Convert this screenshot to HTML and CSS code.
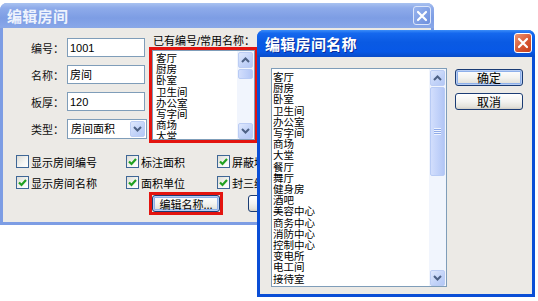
FILE: index.html
```html
<!DOCTYPE html>
<html lang="zh-CN">
<head>
    <meta charset="UTF-8">
    <title>编辑房间</title>
    <link rel="stylesheet" href="styles.css">
</head>
<body>
    <div class="desktop">
        <!-- main dialog, inactive -->
        <div class="window window-main inactive">
            <div class="titlebar">
                <span class="title">编辑房间</span>
                <span class="close-btn">
                    <svg width="12" height="12" viewBox="0 0 12 12"><path d="M2 2 L10 10 M10 2 L2 10" stroke="#fff" stroke-width="2.2" stroke-linecap="round"/></svg>
                </span>
            </div>
            <div class="body main-body">
                <div class="top-area">
                    <div class="fields">
                        <span class="field-label">编号：</span><div class="input">1001</div>
                        <span class="field-label">名称：</span><div class="input">房间</div>
                        <span class="field-label">板厚：</span><div class="input">120</div>
                        <span class="field-label">类型：</span>
                        <div class="combo">
                            <span class="combo-text">房间面积</span>
                            <span class="arrow-btn">
                                <svg width="9" height="6" viewBox="0 0 9 6"><path d="M1 1 L4.5 4.5 L8 1" fill="none" stroke="#4d6185" stroke-width="2"/></svg>
                            </span>
                        </div>
                    </div>
                    <div class="names">
                        <div class="names-label">已有编号/常用名称：</div>
                        <div class="highlight">
                            <div class="listbox listbox-small">
                                <ul class="items">
                                    <li>客厅</li><li>厨房</li><li>卧室</li><li>卫生间</li>
                                    <li>办公室</li><li>写字间</li><li>商场</li><li>大堂</li>
                                </ul>
                                <div class="scrollbar">
                                    <span class="arrow-btn sb-btn">
                                        <svg width="9" height="6" viewBox="0 0 9 6"><path d="M1 5 L4.5 1.5 L8 5" fill="none" stroke="#4d6185" stroke-width="2"/></svg>
                                    </span>
                                    <div class="sb-track"><div class="sb-thumb thumb-small"></div></div>
                                    <span class="arrow-btn sb-btn">
                                        <svg width="9" height="6" viewBox="0 0 9 6"><path d="M1 1 L4.5 4.5 L8 1" fill="none" stroke="#4d6185" stroke-width="2"/></svg>
                                    </span>
                                </div>
                            </div>
                        </div>
                    </div>
                </div>

                <div class="checks">
                    <label class="check"><span class="box"></span>显示房间编号</label>
                    <label class="check"><span class="box"><svg width="11" height="11" viewBox="0 0 11 11"><path d="M2 5.5 L4.5 8 L9 3" fill="none" stroke="#21a121" stroke-width="2.2"/></svg></span>标注面积</label>
                    <label class="check"><span class="box"><svg width="11" height="11" viewBox="0 0 11 11"><path d="M2 5.5 L4.5 8 L9 3" fill="none" stroke="#21a121" stroke-width="2.2"/></svg></span>屏蔽墙体</label>
                    <label class="check"><span class="box"><svg width="11" height="11" viewBox="0 0 11 11"><path d="M2 5.5 L4.5 8 L9 3" fill="none" stroke="#21a121" stroke-width="2.2"/></svg></span>显示房间名称</label>
                    <label class="check"><span class="box"><svg width="11" height="11" viewBox="0 0 11 11"><path d="M2 5.5 L4.5 8 L9 3" fill="none" stroke="#21a121" stroke-width="2.2"/></svg></span>面积单位</label>
                    <label class="check"><span class="box"><svg width="11" height="11" viewBox="0 0 11 11"><path d="M2 5.5 L4.5 8 L9 3" fill="none" stroke="#21a121" stroke-width="2.2"/></svg></span>封三维</label>
                </div>

                <div class="actions">
                    <div class="highlight">
                        <button class="btn btn-focus btn-edit">编辑名称...</button>
                    </div>
                    <button class="btn btn-edit">确定</button>
                </div>
            </div>
        </div>

        <!-- name editor, active -->
        <div class="window window-names active">
            <div class="titlebar">
                <span class="title">编辑房间名称</span>
                <span class="close-btn">
                    <svg width="12" height="12" viewBox="0 0 12 12"><path d="M2 2 L10 10 M10 2 L2 10" stroke="#fff" stroke-width="2.2" stroke-linecap="round"/></svg>
                </span>
            </div>
            <div class="body names-body">
                <div class="listbox listbox-large">
                    <ul class="items">
                        <li>客厅</li><li>厨房</li><li>卧室</li><li>卫生间</li><li>办公室</li>
                        <li>写字间</li><li>商场</li><li>大堂</li><li>餐厅</li><li>舞厅</li>
                        <li>健身房</li><li>酒吧</li><li>美容中心</li><li>商务中心</li><li>消防中心</li>
                        <li>控制中心</li><li>变电所</li><li>电工间</li><li>接待室</li>
                    </ul>
                    <div class="scrollbar">
                        <span class="arrow-btn sb-btn">
                            <svg width="9" height="6" viewBox="0 0 9 6"><path d="M1 5 L4.5 1.5 L8 5" fill="none" stroke="#4d6185" stroke-width="2"/></svg>
                        </span>
                        <div class="sb-track">
                            <div class="sb-thumb thumb-large"><span class="grip"></span></div>
                        </div>
                        <span class="arrow-btn sb-btn">
                            <svg width="9" height="6" viewBox="0 0 9 6"><path d="M1 1 L4.5 4.5 L8 1" fill="none" stroke="#4d6185" stroke-width="2"/></svg>
                        </span>
                    </div>
                </div>
                <div class="side-buttons">
                    <button class="btn btn-focus btn-side">确定</button>
                    <button class="btn btn-side">取消</button>
                </div>
            </div>
        </div>
    </div>
</body>
</html>
```

FILE: styles.css
```css
/* XP-ish palette */
:root {
    --face: #eceae6;
    --field-border: #7f9db9;
    --active-frame: #0a4ed6;
    --inactive-frame: #7d9de4;
    --red-mark: #e3140f;
}

* {
    margin: 0;
    padding: 0;
    box-sizing: border-box;
}

body {
    background: #fff;
    font-family: "Liberation Sans", "Noto Sans CJK SC", sans-serif;
    font-size: 11px;
    color: #000;
}

.desktop {
    position: relative;
    width: 538px;
    height: 301px;
    overflow: hidden;
}

/* Windows */
.window {
    position: absolute;
    display: flex;
    flex-direction: column;
    border-radius: 7px 7px 0 0;
    overflow: hidden;
}

.window-main {
    left: 0;
    top: 3px;
    width: 434px;
    height: 222px;
    background: var(--inactive-frame);
}

.window-names {
    left: 257px;
    top: 30px;
    width: 278px;
    height: 267px;
    background: var(--active-frame);
}

.titlebar {
    display: flex;
    align-items: center;
    justify-content: space-between;
    padding: 0 3px 0 7px;
    flex-shrink: 0;
}

.title {
    font-family: "Noto Sans CJK SC", sans-serif;
    font-size: 15px;
    font-weight: bold;
    line-height: 16px;
    letter-spacing: 0.3px;
}

.inactive .titlebar {
    height: 25px;
    background: linear-gradient(#a9c2f0 0%, #8eabea 20%, #7d9de4 60%, #86a5e8 90%, #8aa8e6 100%);
}

.inactive .title {
    color: #eef3fd;
}

.active .titlebar {
    height: 27px;
    padding-left: 8px;
    background: linear-gradient(#3c8df8 0%, #1568ee 12%, #0a5ae3 45%, #0858e6 80%, #0a4cc8 100%);
}

.active .title {
    color: #fff;
    text-shadow: 1px 1px 0 #0c2f9c;
}

.close-btn {
    width: 18px;
    height: 19px;
    display: flex;
    align-items: center;
    justify-content: center;
    border-radius: 3px;
    border: 1px solid #fff;
}

.inactive .close-btn {
    background: linear-gradient(135deg, #98b4ee, #6d8fdd);
    border-color: #dce6fa;
}

.active .close-btn {
    height: 20px;
    margin-top: -1px;
    background: linear-gradient(135deg, #ee9674, #d5532f 60%, #c4401e);
}

.body {
    flex: 1;
    background: var(--face);
    margin: 0 3px 3px;
}

/* Main dialog body */
.top-area {
    display: flex;
    align-items: flex-start;
}

.fields {
    display: grid;
    grid-template-columns: 61px 80px;
    grid-auto-rows: 19px;
    row-gap: 8px;
    column-gap: 3px;
    margin-top: 10px;
    align-items: center;
}

.field-label {
    font-family: "Noto Sans CJK SC", sans-serif;
    text-align: right;
    line-height: 12px;
    color: #111;
}

.input {
    width: 78px;
    height: 19px;
    background: #fff;
    border: 1px solid var(--field-border);
    padding: 2px 2px 0;
    line-height: 14px;
}

.combo {
    display: flex;
    align-items: center;
    justify-content: space-between;
    height: 20px;
    background: #fff;
    border: 1px solid var(--field-border);
    padding: 0 1px 0 3px;
    margin-top: 1px;
}

.combo-text {
    line-height: 14px;
}

.arrow-btn {
    width: 15px;
    height: 16px;
    display: flex;
    align-items: center;
    justify-content: center;
    border-radius: 2px;
    border: 1px solid #bccdf4;
    background: linear-gradient(135deg, #dfe8fd, #c1d2f8 60%, #b4c8f6);
}

.names {
    margin: 7px 0 0 2px;
}

.names-label {
    padding-left: 4px;
    line-height: 12px;
    white-space: nowrap;
}

.highlight {
    border: 3px solid var(--red-mark);
}

.listbox {
    display: flex;
    background: #fff;
    border: 1px solid var(--field-border);
    overflow: hidden;
}

.listbox-small {
    width: 103px;
    height: 90px;
}

.listbox-large {
    width: 176px;
    height: 219px;
}

.items {
    list-style: none;
    flex: 1;
    font-family: "Noto Sans CJK SC", sans-serif;
    font-size: 10.5px;
    line-height: 11.2px;
    overflow: hidden;
}

.listbox-small .items {
    padding: 1px 0 0 3px;
}

.listbox-large .items {
    padding: 2px 0 0 1px;
}

.scrollbar {
    display: flex;
    flex-direction: column;
    width: 17px;
    padding: 1px 0 0 1px;
    background: #f1f5fd;
}

.sb-btn {
    width: 15px;
    height: 16px;
    flex-shrink: 0;
}

.sb-track {
    flex: 1;
    padding-top: 1px;
}

.sb-thumb {
    width: 15px;
    border-radius: 2px;
    border: 1px solid #b8cbf5;
    background: linear-gradient(90deg, #d2defc, #bfd0f9 60%, #b3c6f5);
    display: flex;
    align-items: center;
    justify-content: center;
}

.thumb-small {
    height: 10px;
}

.thumb-large {
    height: 89px;
}

.grip {
    width: 7px;
    height: 7px;
    background: repeating-linear-gradient(#eef3fe 0 1px, #8faae8 1px 2px);
}

/* Check boxes */
.checks {
    display: grid;
    grid-template-columns: 110px 91px auto;
    row-gap: 8px;
    margin-top: 12px;
    padding-left: 13px;
}

.check {
    display: flex;
    align-items: center;
    gap: 2px;
    height: 13px;
    font-family: "Noto Sans CJK SC", sans-serif;
    line-height: 12px;
    white-space: nowrap;
}

.box {
    width: 13px;
    height: 13px;
    border: 1px solid #3f6796;
    background: linear-gradient(135deg, #dcdcd6, #f6f6f4 60%, #fff);
    display: flex;
    align-items: center;
    justify-content: center;
    flex-shrink: 0;
}

/* Buttons */
.actions {
    display: flex;
    align-items: center;
    gap: 25px;
    margin-top: 3px;
    padding-left: 146px;
}

.btn {
    font-family: "Noto Sans CJK SC", sans-serif;
    font-size: 11px;
    line-height: 12px;
    color: #000;
    border: 1px solid #1b3c74;
    border-radius: 3px;
    background: linear-gradient(#ffffff 0%, #f3f3f0 50%, #e4e3dc 85%, #d2cfc6 100%);
    display: flex;
    align-items: center;
    justify-content: center;
}

.btn-focus {
    box-shadow: inset 0 0 0 1px #b7cdf3, inset 0 0 0 2px #8eb0ea;
}

.btn-edit {
    width: 68px;
    height: 17px;
    padding-top: 1px;
}

.names-body {
    display: flex;
    align-items: flex-start;
    gap: 8px;
    padding: 11px 0 0 11px;
}

.side-buttons {
    display: flex;
    flex-direction: column;
    gap: 7px;
    margin-top: 1px;
}

.btn-side {
    width: 68px;
    height: 17px;
    font-size: 12px;
}
```
